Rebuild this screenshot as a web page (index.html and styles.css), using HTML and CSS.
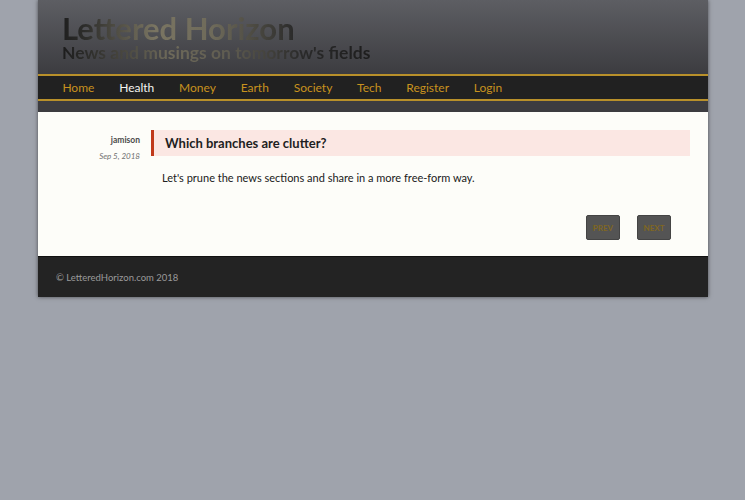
FILE: index.html
```html
<!DOCTYPE html>
<html>
<head>
<meta charset="utf-8">
<link rel="stylesheet" href="styles.css">
</head>
<body>
<div class="page">
  <header class="masthead">
    <h1 class="title">Lettered Horizon</h1>
    <div class="subtitle">News and musings on tomorrow's fields</div>
  </header>
  <nav class="nav">
    <a class="nav-item">Home</a>
    <a class="nav-item active">Health</a>
    <a class="nav-item">Money</a>
    <a class="nav-item">Earth</a>
    <a class="nav-item">Society</a>
    <a class="nav-item">Tech</a>
    <a class="nav-item">Register</a>
    <a class="nav-item">Login</a>
  </nav>
  <div class="strip"></div>
  <main class="content">
    <article class="post">
      <div class="meta">
        <div class="author">jamison</div>
        <div class="date">Sep 5, 2018</div>
      </div>
      <div class="post-main">
        <h2 class="post-title">Which branches are clutter?</h2>
        <p class="post-body">Let's prune the news sections and share in a more free-form way.</p>
      </div>
    </article>
    <div class="pager">
      <button class="pager-btn">PREV</button>
      <button class="pager-btn">NEXT</button>
    </div>
  </main>
  <footer class="footer">© LetteredHorizon.com 2018</footer>
</div>
</body>
</html>
```
FILE: styles.css
```css
html, body { margin: 0; padding: 0; }
body {
  background: #9fa3ac;
  font-family: Lato, "Open Sans", sans-serif;
  height: 500px;
}
.page {
  width: 670px;
  margin-left: 38px;
  box-shadow: 0 0 4px rgba(0,0,0,0.55);
}
.masthead {
  height: 76px;
  box-sizing: border-box;
  padding: 13px 0 0 24px;
  background: linear-gradient(to bottom, #5d5e63 0%, #3c3c40 100%);
  border-bottom: 2px solid #b8902a;
}
.title {
  margin: 0;
  font-size: 31px;
  line-height: 30px;
  font-weight: 700;
  display: inline-block;
  vertical-align: top;
  background: linear-gradient(to right, #1f1f1f 0%, #2d2d2b 10%, #7a7562 40%, #6e6a5a 65%, #2a2a2a 100%);
  -webkit-background-clip: text;
  background-clip: text;
  color: transparent;
}
.subtitle {
  margin-top: 1px;
  font-size: 17.5px;
  line-height: 18px;
  font-weight: 700;
  display: table;
  background: linear-gradient(to right, #1c1c1c 0%, #2c2c2a 8%, #6e6a5a 35%, #5e5b50 55%, #2a2a2a 78%, #1d1d1d 100%);
  -webkit-background-clip: text;
  background-clip: text;
  color: transparent;
}
.nav {
  display: flex;
  height: 23px;
  align-items: center;
  padding-left: 12px;
  background: #212121;
  border-bottom: 2px solid #b8902a;
}
.nav-item {
  color: #c8921e;
  font-size: 12px;
  padding: 0 12.4px;
}
.nav-item.active { color: #f4f4f0; }
.strip {
  height: 11px;
  background: #3c3c40;
}
.content {
  background: #fdfdf9;
  padding: 18px 18px 16px 0;
}
.post {
  display: flex;
}
.meta {
  width: 102px;
  text-align: right;
  padding-right: 11px;
  padding-top: 5px;
}
.author {
  font-size: 8.5px;
  font-weight: 700;
  color: #4a4a4a;
  line-height: 10px;
}
.date {
  font-size: 8px;
  font-style: italic;
  color: #707070;
  margin-top: 6px;
}
.post-main { flex: 1; }
.post-title {
  margin: 0;
  height: 26px;
  box-sizing: border-box;
  border-left: 3px solid #c0391b;
  background: #fbe7e3;
  padding-left: 11px;
  font-size: 13px;
  line-height: 26px;
  font-weight: 700;
  color: #1e1e22;
}
.post-body {
  margin: 15px 0 0 11px;
  font-size: 11px;
  color: #202020;
}
.pager {
  display: flex;
  justify-content: flex-end;
  gap: 17px;
  margin-top: 31px;
  padding-right: 19px;
}
.pager-btn {
  width: 34px;
  height: 25px;
  background: #545454;
  border: 1px solid #444;
  border-radius: 2px;
  color: #806722;
  font-family: inherit;
  font-size: 8px;
  font-weight: 700;
  padding: 0;
}
.footer {
  background: #232323;
  height: 41px;
  box-sizing: border-box;
  padding: 15px 0 0 18px;
  font-size: 9.5px;
  color: #9a9a9a;
  border-top: 1px solid #111;
}
```
